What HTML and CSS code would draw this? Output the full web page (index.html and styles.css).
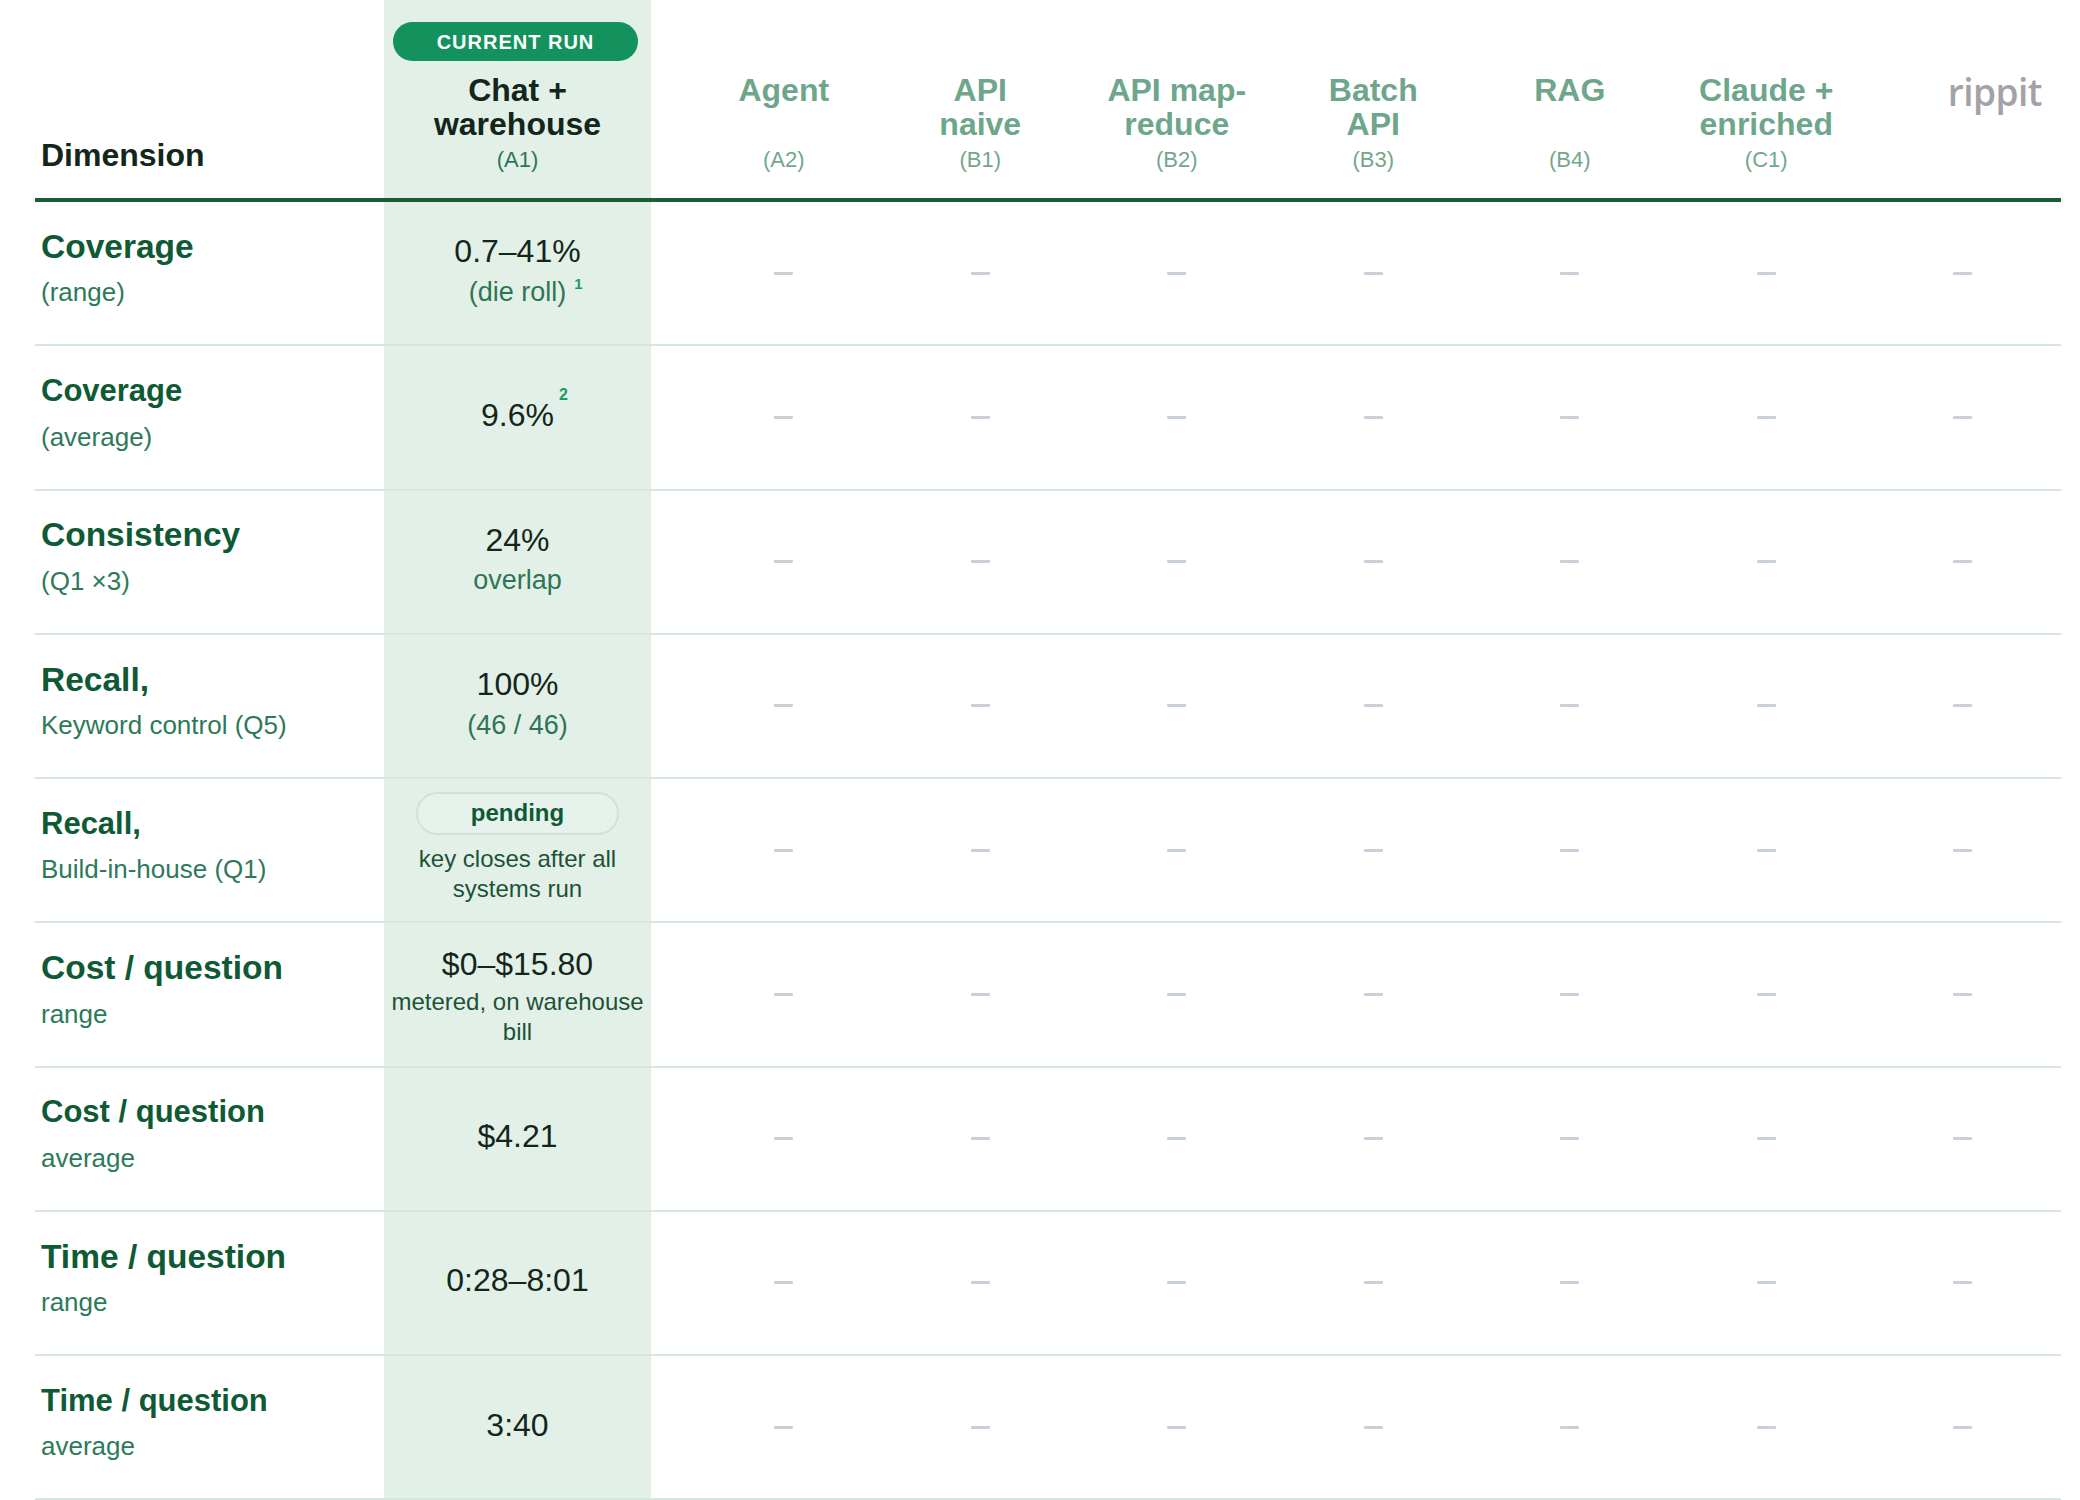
FILE: index.html
```html
<!DOCTYPE html>
<html lang="en">
<head>
<meta charset="utf-8">
<title>Comparison</title>
<link rel="stylesheet" href="styles.css">
</head>
<body>
<div class="table">
  <div class="row head">
    <div class="cell dim-h">Dimension</div>
    <div class="cell cur-h">
      <span class="badge">CURRENT RUN</span>
      <div class="h-title">Chat +<br>warehouse</div>
      <div class="h-code">(A1)</div>
    </div>
    <div class="cell sys-h"><div class="h-title">Agent</div><div class="h-code">(A2)</div></div>
    <div class="cell sys-h"><div class="h-title">API<br>naive</div><div class="h-code">(B1)</div></div>
    <div class="cell sys-h"><div class="h-title">API map-<br>reduce</div><div class="h-code">(B2)</div></div>
    <div class="cell sys-h"><div class="h-title">Batch<br>API</div><div class="h-code">(B3)</div></div>
    <div class="cell sys-h"><div class="h-title">RAG</div><div class="h-code">(B4)</div></div>
    <div class="cell sys-h"><div class="h-title">Claude +<br>enriched</div><div class="h-code">(C1)</div></div>
    <div class="cell sys-h"><div class="h-title brand"><span class="rippit">rippit</span></div><div class="h-code"></div></div>
  </div>

  <div class="row body">
    <div class="cell dim"><div class="dim-title">Coverage</div><div class="dim-sub">(range)</div></div>
    <div class="cell cur"><div class="val">0.7–41%</div><div class="val-sub"><span class="fn-anchor">(die roll)<sup class="fn">1</sup></span></div></div>
    <div class="cell na"><span class="dash"></span></div>
    <div class="cell na"><span class="dash"></span></div>
    <div class="cell na"><span class="dash"></span></div>
    <div class="cell na"><span class="dash"></span></div>
    <div class="cell na"><span class="dash"></span></div>
    <div class="cell na"><span class="dash"></span></div>
    <div class="cell na"><span class="dash"></span></div>
  </div>

  <div class="row body">
    <div class="cell dim"><div class="dim-title sm">Coverage</div><div class="dim-sub">(average)</div></div>
    <div class="cell cur"><div class="val"><span class="fn-anchor">9.6%<sup class="fn hi">2</sup></span></div></div>
    <div class="cell na"><span class="dash"></span></div>
    <div class="cell na"><span class="dash"></span></div>
    <div class="cell na"><span class="dash"></span></div>
    <div class="cell na"><span class="dash"></span></div>
    <div class="cell na"><span class="dash"></span></div>
    <div class="cell na"><span class="dash"></span></div>
    <div class="cell na"><span class="dash"></span></div>
  </div>

  <div class="row body">
    <div class="cell dim"><div class="dim-title">Consistency</div><div class="dim-sub">(Q1 ×3)</div></div>
    <div class="cell cur"><div class="val">24%</div><div class="val-sub">overlap</div></div>
    <div class="cell na"><span class="dash"></span></div>
    <div class="cell na"><span class="dash"></span></div>
    <div class="cell na"><span class="dash"></span></div>
    <div class="cell na"><span class="dash"></span></div>
    <div class="cell na"><span class="dash"></span></div>
    <div class="cell na"><span class="dash"></span></div>
    <div class="cell na"><span class="dash"></span></div>
  </div>

  <div class="row body">
    <div class="cell dim"><div class="dim-title">Recall,</div><div class="dim-sub">Keyword control (Q5)</div></div>
    <div class="cell cur"><div class="val">100%</div><div class="val-sub">(46 / 46)</div></div>
    <div class="cell na"><span class="dash"></span></div>
    <div class="cell na"><span class="dash"></span></div>
    <div class="cell na"><span class="dash"></span></div>
    <div class="cell na"><span class="dash"></span></div>
    <div class="cell na"><span class="dash"></span></div>
    <div class="cell na"><span class="dash"></span></div>
    <div class="cell na"><span class="dash"></span></div>
  </div>

  <div class="row body">
    <div class="cell dim"><div class="dim-title sm">Recall,</div><div class="dim-sub">Build-in-house (Q1)</div></div>
    <div class="cell cur"><span class="pill">pending</span><div class="note">key closes after all systems run</div></div>
    <div class="cell na"><span class="dash"></span></div>
    <div class="cell na"><span class="dash"></span></div>
    <div class="cell na"><span class="dash"></span></div>
    <div class="cell na"><span class="dash"></span></div>
    <div class="cell na"><span class="dash"></span></div>
    <div class="cell na"><span class="dash"></span></div>
    <div class="cell na"><span class="dash"></span></div>
  </div>

  <div class="row body">
    <div class="cell dim"><div class="dim-title">Cost / question</div><div class="dim-sub">range</div></div>
    <div class="cell cur"><div class="val">$0–$15.80</div><div class="note tight">metered, on warehouse bill</div></div>
    <div class="cell na"><span class="dash"></span></div>
    <div class="cell na"><span class="dash"></span></div>
    <div class="cell na"><span class="dash"></span></div>
    <div class="cell na"><span class="dash"></span></div>
    <div class="cell na"><span class="dash"></span></div>
    <div class="cell na"><span class="dash"></span></div>
    <div class="cell na"><span class="dash"></span></div>
  </div>

  <div class="row body">
    <div class="cell dim"><div class="dim-title sm">Cost / question</div><div class="dim-sub">average</div></div>
    <div class="cell cur"><div class="val">$4.21</div></div>
    <div class="cell na"><span class="dash"></span></div>
    <div class="cell na"><span class="dash"></span></div>
    <div class="cell na"><span class="dash"></span></div>
    <div class="cell na"><span class="dash"></span></div>
    <div class="cell na"><span class="dash"></span></div>
    <div class="cell na"><span class="dash"></span></div>
    <div class="cell na"><span class="dash"></span></div>
  </div>

  <div class="row body">
    <div class="cell dim"><div class="dim-title">Time / question</div><div class="dim-sub">range</div></div>
    <div class="cell cur"><div class="val">0:28–8:01</div></div>
    <div class="cell na"><span class="dash"></span></div>
    <div class="cell na"><span class="dash"></span></div>
    <div class="cell na"><span class="dash"></span></div>
    <div class="cell na"><span class="dash"></span></div>
    <div class="cell na"><span class="dash"></span></div>
    <div class="cell na"><span class="dash"></span></div>
    <div class="cell na"><span class="dash"></span></div>
  </div>

  <div class="row body">
    <div class="cell dim"><div class="dim-title sm">Time / question</div><div class="dim-sub">average</div></div>
    <div class="cell cur"><div class="val">3:40</div></div>
    <div class="cell na"><span class="dash"></span></div>
    <div class="cell na"><span class="dash"></span></div>
    <div class="cell na"><span class="dash"></span></div>
    <div class="cell na"><span class="dash"></span></div>
    <div class="cell na"><span class="dash"></span></div>
    <div class="cell na"><span class="dash"></span></div>
    <div class="cell na"><span class="dash"></span></div>
  </div>
</div>
</body>
</html>
```

FILE: styles.css
```css
html, body {
  margin: 0;
  padding: 0;
  background: #ffffff;
}

body {
  font-family: "Liberation Sans", Arial, Helvetica, sans-serif;
  color: #13261b;
}

.table {
  margin-left: 35px;
  width: 2026px;
}

.row {
  display: grid;
  grid-template-columns: 349px 267px 34.5px repeat(7, 196.5px);
}

.row > .cell:nth-child(3) {
  grid-column-start: 4;
}

/* ---------- header ---------- */
.row.head {
  height: 198px;
  border-bottom: 4px solid #1b5e35;
}

.head .cell {
  display: flex;
  flex-direction: column;
  justify-content: flex-end;
  padding-bottom: 25.3px;
  box-sizing: border-box;
}

.dim-h {
  padding-left: 6px;
  font-size: 32px;
  font-weight: 700;
  line-height: 36px;
  color: #13261b;
  padding-bottom: 25px !important;
}

.cur-h {
  background: #e3f0e8;
  align-items: center;
  text-align: center;
}

.badge {
  display: block;
  width: 245px;
  height: 39px;
  margin-right: 4px;
  border-radius: 20px;
  background: #13925d;
  color: #ffffff;
  font-size: 20px;
  font-weight: 700;
  letter-spacing: 1px;
  line-height: 40px;
  text-align: center;
  margin-bottom: 12.4px;
}

.h-title {
  min-height: 68px;
  font-size: 32px;
  font-weight: 700;
  line-height: 34px;
  color: #6ea68b;
}

.cur-h .h-title {
  color: #13261b;
}

.h-code {
  margin-top: 5.3px;
  height: 26px;
  font-size: 22px;
  line-height: 26px;
  color: #72a78d;
}

.cur-h .h-code {
  color: #2e7555;
}

.sys-h {
  text-align: center;
}

.h-title.brand {
  text-align: right;
  padding-right: 19px;
}

.rippit {
  font-family: "Open Sans", "Noto Sans", sans-serif;
  font-weight: 600;
  font-size: 37px;
  letter-spacing: -0.5px;
  line-height: 38px;
  color: #a3a2a7;
}

/* ---------- body rows ---------- */
.row.body {
  height: 144.25px;
  border-bottom: 2px solid #d6e8de;
  box-sizing: border-box;
}

.body .cell {
  box-sizing: border-box;
  display: flex;
  flex-direction: column;
  justify-content: center;
}

.dim {
  padding: 0 0 11px 6px;
}

.dim-title {
  font-size: 33.5px;
  font-weight: 700;
  line-height: 40px;
  color: #0e5a35;
  white-space: nowrap;
}

.dim-title.sm {
  font-size: 31px;
}

.dim-sub {
  margin-top: 9.5px;
  font-size: 26px;
  line-height: 32px;
  color: #2d7a5a;
  white-space: nowrap;
}

.cur {
  background: #e3f0e8;
  align-items: center;
  text-align: center;
  padding: 0 5px 5px;
}

.val {
  font-size: 32px;
  line-height: 38px;
  color: #13261b;
}

.val-sub {
  margin-top: 4.7px;
  font-size: 27px;
  line-height: 34px;
  color: #2e7555;
}

.note {
  margin-top: 0;
  font-size: 24px;
  line-height: 30px;
  color: #1d5237;
}

.note.tight {
  margin-top: 4px;
  margin-bottom: -8px;
}

.pill {
  display: block;
  box-sizing: border-box;
  width: 203px;
  height: 43px;
  margin-bottom: 9px;
  border: 2px solid #d0e3d8;
  border-radius: 22px;
  background: #e7f2ec;
  font-size: 24px;
  font-weight: 700;
  line-height: 37px;
  color: #0e5a35;
}

.fn-anchor {
  position: relative;
}

.fn {
  position: absolute;
  left: 100%;
  top: -1px;
  margin-left: 8px;
  font-size: 15px;
  font-weight: 700;
  line-height: 15px;
  color: #1c9c66;
}

.fn.hi {
  top: -10px;
  margin-left: 5px;
  font-size: 16px;
  line-height: 16px;
}

.na {
  align-items: center;
}

.dash {
  display: block;
  width: 19px;
  height: 3px;
  border-radius: 1px;
  background: #c9d0da;
}
```
